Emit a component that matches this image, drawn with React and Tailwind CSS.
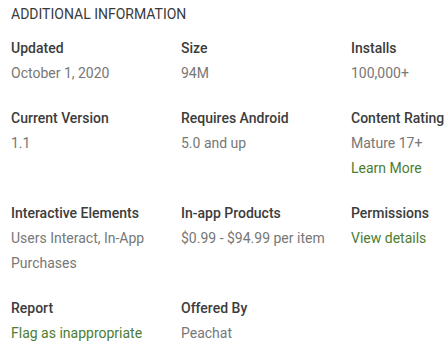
import React from 'react';

const rows = [
  [
    { label: 'Updated', value: 'October 1, 2020' },
    { label: 'Size', value: '94M' },
    { label: 'Installs', value: '100,000+' },
  ],
  [
    { label: 'Current Version', value: '1.1' },
    { label: 'Requires Android', value: '5.0 and up' },
    { label: 'Content Rating', value: 'Mature 17+', link: 'Learn More' },
  ],
  [
    { label: 'Interactive Elements', value: 'Users Interact, In-App Purchases' },
    { label: 'In-app Products', value: '$0.99 - $94.99 per item' },
    { label: 'Permissions', link: 'View details' },
  ],
  [
    { label: 'Report', link: 'Flag as inappropriate' },
    { label: 'Offered By', value: 'Peachat' },
  ],
];

const App = () => {
  return (
    <div
      className="w-[448px] h-[350px] overflow-hidden bg-white pl-[11px] pt-0.5 text-[14px] leading-[25px]"
      style={{ fontFamily: 'Roboto, "Liberation Sans", sans-serif' }}
    >
      <h2 className="text-[#3a3a3a] font-normal uppercase">Additional Information</h2>

      <div className="mt-[9px] grid grid-cols-[170px_170px_1fr] gap-y-5">
        {rows.flat().map((item) => (
          <div key={item.label} className="min-w-0">
            <div className="font-medium text-[#3c3c3c] whitespace-nowrap">{item.label}</div>
            {item.value && <div className="text-[#777777] pr-4">{item.value}</div>}
            {item.link && (
              <a href="#" className="block text-[#4b7d32] whitespace-nowrap">
                {item.link}
              </a>
            )}
          </div>
        ))}
      </div>
    </div>
  );
};

export default App;
